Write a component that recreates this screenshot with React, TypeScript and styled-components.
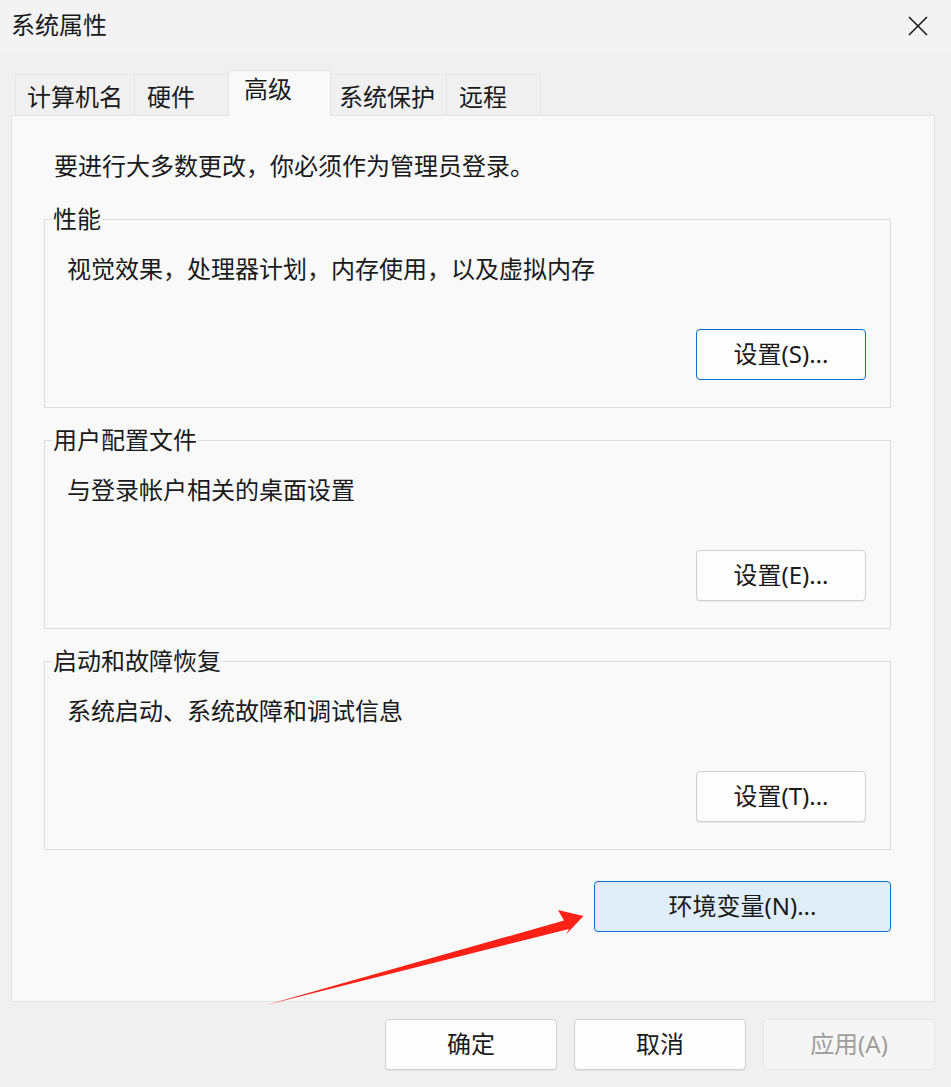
import React from "react";
import styled, { createGlobalStyle } from "styled-components";

const GlobalStyle = createGlobalStyle`
  html, body {
    margin: 0;
    padding: 0;
    background: #f0f0f0;
  }
  body {
    font-family: "Noto Sans", "Noto Sans CJK SC", sans-serif;
    color: #1a1a1a;
    -webkit-font-smoothing: antialiased;
  }
  * { box-sizing: border-box; }
`;

const Window = styled.div`
  position: relative;
  width: 951px;
  height: 1087px;
  display: flex;
  flex-direction: column;
  background: #f0f0f0;
  overflow: hidden;
`;

const TitleBar = styled.div`
  height: 53px;
  flex: none;
  display: flex;
  align-items: center;
  justify-content: space-between;
  padding: 0 23px 3px 11px;
  background: #f3f3f3;
`;

const Title = styled.div`
  font-size: 24px;
  line-height: 32px;
  color: #1a1a1a;
`;

const CloseButton = styled.div`
  width: 20px;
  height: 20px;
  display: flex;
  margin-top: 2px;
`;

const Body = styled.div`
  flex: 1;
  display: flex;
  flex-direction: column;
  padding: 17px 16px 0 11px;
`;

const TabStrip = styled.div`
  display: flex;
  align-items: flex-end;
  padding-left: 4px;
  height: 45px;
  position: relative;
  z-index: 1;
`;

const Tab = styled.div<{ $w: number; $pl: number; $active?: boolean }>`
  width: ${(p) => p.$w}px;
  height: ${(p) => (p.$active ? 46 : 41)}px;
  margin-right: -1px;
  margin-bottom: ${(p) => (p.$active ? -1 : 0)}px;
  padding-left: ${(p) => p.$pl}px;
  padding-top: ${(p) => (p.$active ? 2 : 6)}px;
  border: 1px solid ${(p) => (p.$active ? "#e3e3e3" : "#e6e6e6")};
  border-bottom: none;
  background: ${(p) => (p.$active ? "#f9f9f9" : "#f0f0f0")};
  font-size: 24px;
  line-height: 32px;
  color: #1a1a1a;
  white-space: nowrap;
  position: relative;
  z-index: ${(p) => (p.$active ? 2 : 1)};
`;

const Panel = styled.div`
  width: 924px;
  height: 887px;
  border: 1px solid #e3e3e3;
  background: #f9f9f9;
  padding: 34px 43px 0 32px;
  display: flex;
  flex-direction: column;
`;

const Notice = styled.div`
  margin-left: 10px;
  margin-bottom: 21px;
  font-size: 24px;
  line-height: 32px;
`;

const Groups = styled.div`
  display: flex;
  flex-direction: column;
  gap: 16px;
`;

const GroupBox = styled.fieldset`
  margin: 0;
  min-width: 0;
  padding: 0 24px 27px 7px;
  border: 1px solid #dcdcdc;
`;

const Legend = styled.legend`
  padding: 0 1px;
  font-size: 24px;
  line-height: 32px;
`;

const Desc = styled.div`
  margin: 18px 0 0 15px;
  font-size: 24px;
  line-height: 32px;
`;

const ButtonRow = styled.div<{ $mt: number }>`
  display: flex;
  justify-content: flex-end;
  margin-top: ${(p) => p.$mt}px;
`;

type Variant = "normal" | "focused" | "accent" | "disabled";

const Button = styled.div<{ $w: number; $variant?: Variant }>`
  width: ${(p) => p.$w}px;
  height: 51px;
  display: flex;
  align-items: center;
  justify-content: center;
  padding-bottom: 2px;
  border-radius: 4px;
  font-size: 24px;
  line-height: 32px;
  border: 1px solid
    ${(p) =>
      p.$variant === "focused" || p.$variant === "accent"
        ? "#0a6fcb"
        : p.$variant === "disabled"
        ? "#e6e6e6"
        : "#d0d0d0"};
  background: ${(p) =>
    p.$variant === "accent"
      ? "#e0eef9"
      : p.$variant === "disabled"
      ? "#f5f5f5"
      : "#fdfdfd"};
  color: ${(p) => (p.$variant === "disabled" ? "#9d9d9d" : "#1a1a1a")};
  box-shadow: ${(p) =>
    p.$variant === "normal" ? "0 1px 0 rgba(0,0,0,0.06)" : "none"};
`;

const Footer = styled.div`
  display: flex;
  justify-content: flex-end;
  gap: 17px;
  margin-top: 17px;
`;

const ArrowLayer = styled.svg`
  position: absolute;
  left: 0;
  top: 0;
  width: 951px;
  height: 1087px;
  pointer-events: none;
  z-index: 5;
`;

const tabs = [
  { label: "计算机名", w: 120, pl: 11 },
  { label: "硬件", w: 95, pl: 12 },
  { label: "高级", w: 103, pl: 15, active: true },
  { label: "系统保护", w: 117, pl: 8 },
  { label: "远程", w: 95, pl: 12 },
];

const groups = [
  { title: "性能", desc: "视觉效果，处理器计划，内存使用，以及虚拟内存", btn: "设置(S)...", focused: true },
  { title: "用户配置文件", desc: "与登录帐户相关的桌面设置", btn: "设置(E)..." },
  { title: "启动和故障恢复", desc: "系统启动、系统故障和调试信息", btn: "设置(T)..." },
];

export default function App() {
  return (
    <>
      <GlobalStyle />
      <Window>
        <TitleBar>
          <Title>系统属性</Title>
          <CloseButton>
            <svg width="20" height="20" viewBox="0 0 20 20">
              <path d="M1 1 L19 19 M19 1 L1 19" stroke="#1a1a1a" strokeWidth="1.6" fill="none" />
            </svg>
          </CloseButton>
        </TitleBar>
        <Body>
          <TabStrip>
            {tabs.map((t) => (
              <Tab key={t.label} $w={t.w} $pl={t.pl} $active={t.active}>
                {t.label}
              </Tab>
            ))}
          </TabStrip>
          <Panel>
            <Notice>要进行大多数更改，你必须作为管理员登录。</Notice>
            <Groups>
              {groups.map((g) => (
                <GroupBox key={g.title}>
                  <Legend>{g.title}</Legend>
                  <Desc>{g.desc}</Desc>
                  <ButtonRow $mt={44}>
                    <Button $w={170} $variant={g.focused ? "focused" : "normal"}>
                      {g.btn}
                    </Button>
                  </ButtonRow>
                </GroupBox>
              ))}
            </Groups>
            <ButtonRow $mt={31}>
              <Button $w={297} $variant="accent">
                环境变量(N)...
              </Button>
            </ButtonRow>
          </Panel>
          <Footer>
            <Button $w={172} $variant="normal">确定</Button>
            <Button $w={172} $variant="normal">取消</Button>
            <Button $w={172} $variant="disabled">应用(A)</Button>
          </Footer>
        </Body>
        <ArrowLayer viewBox="0 0 951 1087">
          <polygon
            points="266,1005 564,920.5 558,910 583.5,916 566,934.5 569,929"
            fill="#ff2116"
          />
        </ArrowLayer>
      </Window>
    </>
  );
}
